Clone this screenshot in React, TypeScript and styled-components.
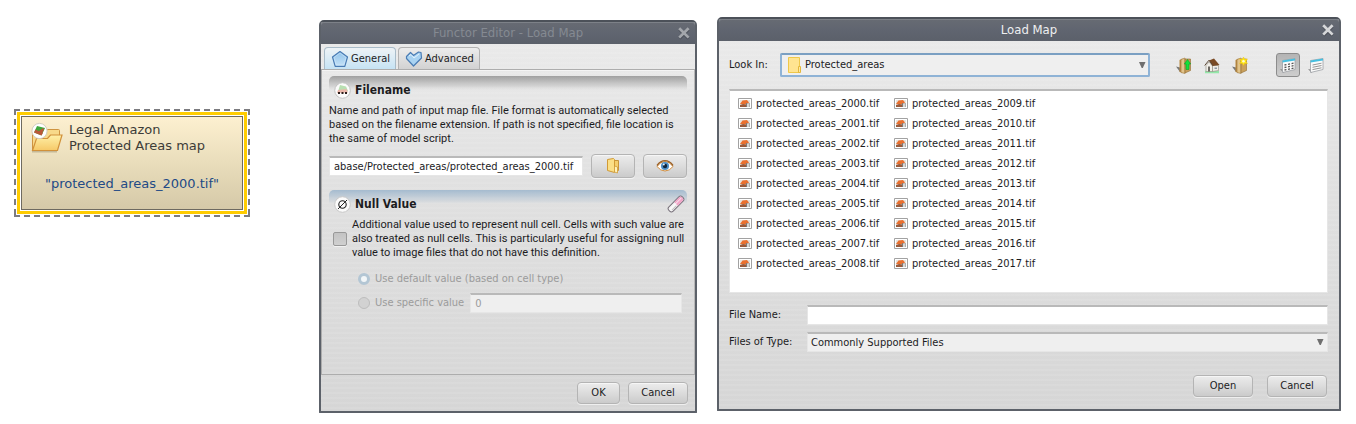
import React, { useState } from "react";
import styled, { createGlobalStyle, css } from "styled-components";

const GlobalStyle = createGlobalStyle`
  *, *::before, *::after { box-sizing: border-box; }
  body { margin: 0; background: #fff; }
  body, button, input, select {
    font-family: "DejaVu Sans Condensed", "DejaVu Sans", Tahoma, sans-serif;
    font-size: 11px;
    line-height: 14px;
    color: #1c1c1e;
  }
  svg { display: block; flex: none; }
`;

/* ---------- page ---------- */

const Page = styled.main`
  display: grid;
  grid-template-columns: 236px minmax(427px, 427fr) minmax(560px, 624fr);
  column-gap: 20px;
  align-items: start;
  padding: 17px 15px 11px 14px;
`;

/* ---------- model node ---------- */

const dashes = (angle: string) =>
  `repeating-linear-gradient(${angle}, #7c7c80 0 6px, transparent 6px 10px)`;

const Node = styled.section`
  margin-top: 92px;
  padding: 3px;
  background:
    ${dashes("90deg")} top / 100% 2px no-repeat,
    ${dashes("90deg")} bottom / 100% 2px no-repeat,
    ${dashes("180deg")} left / 2px 100% no-repeat,
    ${dashes("180deg")} right / 2px 100% no-repeat;
`;

const NodeFrame = styled.div`
  padding: 1px;
  border: 3px solid #ffcc00;
  background: #fff;
`;

const NodeBody = styled.div`
  display: flex;
  flex-direction: column;
  gap: 22px;
  height: 94px;
  padding: 5px 9px;
  border: 1px solid #6e6a60;
  background: linear-gradient(#fdf0d0, #e9ddbb 50%, #d5c9a8);
  font-family: "DejaVu Sans", sans-serif;
  font-size: 13px;
  line-height: 16px;
`;

const NodeTitle = styled.div`
  display: flex;
  gap: 6px;
  color: #3d3c38;
  white-space: nowrap;
`;

const NodeValue = styled.div`
  text-align: center;
  color: #224a86;
  white-space: nowrap;
`;

/* ---------- window chrome ---------- */

const Window = styled.section<{ $inset?: boolean }>`
  display: flex;
  flex-direction: column;
  min-height: ${(p) => (p.$inset ? 393 : 394)}px;
  margin: ${(p) => (p.$inset ? "3px 0 0 49px" : "0")};
  border: 2px solid #5c6169;
  border-top-color: #4c5159;
  border-radius: 5px 5px 1px 1px;
  background:
    repeating-linear-gradient(rgba(255, 255, 255, 0.08) 0 2px, transparent 2px 5px),
    linear-gradient(#ebebeb, #e1e1e1 40%, #d6d6d6);
`;

const TitleBar = styled.header<{ $dim?: boolean }>`
  display: flex;
  align-items: center;
  height: 22px;
  padding: 0 4px 0 18px;
  background: linear-gradient(#676b73, #606570 50%, #5b606a);
  box-shadow: inset 0 1px #7d8188;
  border-radius: 3px 3px 0 0;
  color: ${(p) => (p.$dim ? "#858a92" : "#eeeff0")};
`;

const WindowTitle = styled.h1`
  flex: 1;
  margin: 0;
  text-align: center;
  font-size: 13px;
  font-weight: 400;
  line-height: 16px;
`;

const CloseButton = styled.button<{ $dim?: boolean }>`
  padding: 0;
  border: 0;
  background: none;
  color: ${(p) => (p.$dim ? "#a3a6ab" : "#d6d7d9")};
`;

const PushButton = styled.button<{ $width: number; $tall?: boolean }>`
  display: flex;
  align-items: center;
  justify-content: center;
  width: ${(p) => p.$width}px;
  height: ${(p) => (p.$tall ? 24 : 22)}px;
  padding: 0;
  border: 1px solid #b4b4b4;
  border-radius: 4px;
  background: linear-gradient(#ececec, #dcdcdc 50%, #cbcbcb);
  box-shadow: inset 0 1px #f6f6f6, 0 1px rgba(255, 255, 255, 0.6);
`;

const sunken = css`
  height: 20px;
  min-width: 0;
  border: 1px solid #e6e6e6;
  border-top: 2px solid #b9b9b9;
  border-radius: 0;
  outline: 0;
`;

const TextBox = styled.input`
  ${sunken}
  flex: 1;
  width: 100%;
  padding: 0 4px;
  background: #fff;
  &:disabled {
    background: #efefef;
    color: #9b9b9b;
  }
`;

/* ---------- functor editor ---------- */

const Tabs = styled.div`
  display: flex;
  gap: 2px;
  padding: 3px 3px 0;
`;

const Tab = styled.button<{ $active?: boolean }>`
  display: flex;
  align-items: center;
  gap: 2px;
  height: 22px;
  padding: 0 5px 0 6px;
  border: 1px solid ${(p) => (p.$active ? "#a9bcc9" : "#b2b2b2")};
  border-bottom: 0;
  border-radius: 4px 4px 0 0;
  background: ${(p) =>
    p.$active ? "linear-gradient(#eef3f6, #c6e3f4)" : "linear-gradient(#ececec, #d2d2d2)"};
`;

const Pane = styled.div`
  flex: 1;
  padding: 6px 7px;
  border: 1px solid #adadad;
  border-right-color: #b8b8b8;
  box-shadow: inset 0 1px #f4f4f4;
`;

const SectionHead = styled.div<{ $tone: string }>`
  display: flex;
  align-items: center;
  gap: 4px;
  height: 28px;
  padding: 0 2px 0 5px;
  border-radius: 5px 5px 0 0;
  background: linear-gradient(${(p) => p.$tone}, transparent 14px);
`;

const SectionTitle = styled.h2`
  flex: 1;
  margin: 0;
  font-size: 12px;
  font-weight: 700;
`;

const Help = styled.p`
  margin: 0;
  font-family: Roboto, "DejaVu Sans Condensed", sans-serif;
  white-space: nowrap;
`;

const FileRow = styled.div`
  display: flex;
  align-items: center;
  gap: 8px;
  margin: 8px 0 12px;
`;

const NullOption = styled.label`
  display: flex;
  align-items: center;
  gap: 5px;
  padding-left: 4px;
`;

const CheckBox = styled.input`
  appearance: none;
  flex: none;
  width: 14px;
  height: 14px;
  margin: 0;
  border: 1px solid #999;
  border-radius: 2px;
  background: linear-gradient(#c3c3c3, #d0d0d0);
  box-shadow: 0 1px #f2f2f2;
`;

const Radios = styled.div`
  display: flex;
  flex-direction: column;
  gap: 4px;
  padding: 9px 5px 0 29px;
`;

const RadioRow = styled.div`
  display: flex;
  align-items: center;
  gap: 6px;
  height: 20px;
`;

const RadioLabel = styled.label`
  display: flex;
  align-items: center;
  gap: 5px;
  color: #9b9b9b;
  white-space: nowrap;
`;

const Radio = styled.input`
  appearance: none;
  width: 12px;
  height: 12px;
  margin: 0;
  border: 1px solid #bdbdbd;
  border-radius: 50%;
  background: #d2d2d2;
  &:checked {
    border: 3px solid #b3c6d4;
    background: #f2f6f8;
  }
`;

const Footer = styled.footer`
  display: flex;
  justify-content: flex-end;
  gap: 8px;
  padding: 7px;
`;

/* ---------- file chooser ---------- */

const Chooser = styled.form`
  flex: 1;
  display: grid;
  grid-template-columns: 78px 1fr;
  align-items: center;
  align-content: start;
  padding: 12px 11px 12px 10px;
`;

const LookIn = styled.div`
  grid-column: 1 / -1;
  display: flex;
  align-items: center;
  margin-bottom: 12px;
`;

const LookLabel = styled.label`
  width: 51px;
`;

const SelectWrap = styled.div`
  position: relative;
  flex: 1;
  display: flex;
`;

const WrapIcon = styled.span<{ $end?: boolean }>`
  position: absolute;
  top: 0;
  bottom: 0;
  ${(p) => (p.$end ? "right: 4px;" : "left: 8px;")}
  display: flex;
  align-items: center;
  pointer-events: none;
`;

const TypeSelect = styled.select`
  ${sunken}
  appearance: none;
  width: 100%;
  padding: 0 3px;
  background: #efefef;
`;

const PlaceSelect = styled.select`
  appearance: none;
  width: 100%;
  height: 24px;
  padding: 0 23px;
  border: 2px solid #8fb3d6;
  border-top-color: #7a9fc2;
  border-radius: 2px;
  outline: 0;
  background: #efefef;
`;

const Tools = styled.div`
  display: flex;
  align-items: center;
  gap: 4px;
  padding-left: 22px;
`;

const ToolButton = styled.button<{ $on?: boolean }>`
  display: flex;
  align-items: center;
  justify-content: center;
  width: 24px;
  height: 24px;
  padding: 0;
  border: 1px solid ${(p) => (p.$on ? "#8c8c8c" : "transparent")};
  border-radius: 3px;
  background: ${(p) => (p.$on ? "linear-gradient(#b4b4b4, #cdcdcd)" : "none")};
`;

const ToolGap = styled.span`
  width: 16px;
`;

const FileList = styled.ul`
  grid-column: 1 / -1;
  display: grid;
  grid-auto-flow: column;
  grid-template-rows: repeat(9, 20px);
  grid-auto-columns: 156px;
  height: 204px;
  margin: 0 0 12px;
  padding: 3px 8px;
  list-style: none;
  background: #fff;
  border: 1px solid #e6e6e6;
  border-top: 2px solid #b9b9b9;
`;

const FileItem = styled.li`
  display: flex;
  align-items: center;
  gap: 4px;
  white-space: nowrap;
`;

const TypeRow = styled.div`
  position: relative;
  display: flex;
  margin-top: 7px;
`;

const TypeLabel = styled.label`
  margin-top: 7px;
`;

const Actions = styled.div`
  grid-column: 1 / -1;
  display: flex;
  justify-content: flex-end;
  gap: 14px;
  margin-top: 23px;
  padding-right: 1px;
`;

/* ---------- icons ---------- */

const CloseIcon = () => (
  <svg width="14" height="14" viewBox="0 0 14 14">
    <path d="M2.5 3.5l9 9M11.500 3.500l-9 9" stroke="#3d4148" strokeWidth="3" opacity=".6" />
    <path d="M2.200 2.200l9.400 9.400M11.600 2.200l-9.400 9.400" stroke="currentColor" strokeWidth="2.700" />
  </svg>
);

const ArrowIcon = () => (
  <svg width="8" height="8" viewBox="0 0 8 8">
    <path d="M1 1h6.500L4.800 7H3.700z" fill="#6f6f6f" />
  </svg>
);

const NodeFolderIcon = () => (
  <svg width="32" height="32" viewBox="0 0 32 32">
    <defs>
      <linearGradient id="nf" x2="0" y2="1">
        <stop stopColor="#fff0a8" />
        <stop offset="1" stopColor="#f6c968" />
      </linearGradient>
    </defs>
    <path d="M1 29.500h25" stroke="#8a7c58" strokeWidth="2" opacity=".4" />
    <path d="M1.500 28V12q0-1 1-1h11l3-3.500h11q1 0 1 1V14L26 28z" fill="#f8d98a" stroke="#cf9440" />
    <path d="M1.500 28.500L5.500 16.500h11l3-3.500H31L26.500 28.500z" fill="url(#nf)" stroke="#d1913a" strokeWidth="1.200" />
    <circle cx="8.500" cy="9" r="7.600" fill="#fff" stroke="#d2cdbf" />
    <path d="M6 4l8 2-3.500 7.500L3 10.500z" fill="#3fa83c" />
    <path d="M4.500 7.500L12 11l-1.500 2.500L3 10.500zM8 9l4-3 1 1.500-2 4z" fill="#cf4a38" opacity=".85" />
  </svg>
);

const PentagonIcon = () => (
  <svg width="18" height="18" viewBox="0 0 18 18">
    <defs>
      <linearGradient id="pg" x2="0" y2="1">
        <stop stopColor="#8fc2ea" />
        <stop offset="1" stopColor="#c5e2f7" />
      </linearGradient>
    </defs>
    <path d="M9 1.500L16.500 7l-2.700 9.300H4.200L1.500 7z" fill="url(#pg)" stroke="#4a7cb4" strokeWidth="1.200" strokeLinejoin="round" />
    <path d="M9 3l6 4.500-2.200 7.500H5.200L3 7.500z" fill="none" stroke="#d6ebfa" strokeWidth=".7" opacity=".7" />
  </svg>
);

const HeartIcon = () => (
  <svg width="18" height="18" viewBox="0 0 18 18">
    <path d="M1.500 6.500L5.500 2.500l3 3L13.500 2l2.500.5.500 5.500-8 8-7-7.500z" fill="#a9d3f2" stroke="#4a7cb4" strokeWidth="1.200" strokeLinejoin="round" />
    <path d="M4 6l2-1.500L9 8l5-4" stroke="#e3f2fc" fill="none" />
  </svg>
);

const MapBadge = () => (
  <svg width="17" height="17" viewBox="0 0 17 17">
    <circle cx="8.500" cy="8.500" r="7.800" fill="#fbfbfb" stroke="#c3c3c3" />
    <path d="M6 3l6 1.500 2 4.500-10 .5z" fill="#b9dfb2" />
    <path d="M4 8l8.500-1 1.500 3.500-11 .5z" fill="#e9b7aa" />
    <path d="M4 10h2v2H4zM7.500 10h2v2h-2zM11 10h2v2h-2z" fill="#2b1c1a" />
  </svg>
);

const NullBadge = () => (
  <svg width="17" height="17" viewBox="0 0 17 17">
    <circle cx="8.500" cy="8.500" r="7.800" fill="#fbfbfb" stroke="#c9c9c9" />
    <circle cx="8.500" cy="8.500" r="3.700" fill="none" stroke="#222" strokeWidth="1.100" />
    <path d="M4 13l9-9" stroke="#222" />
  </svg>
);

const EraserIcon = () => (
  <svg width="18" height="18" viewBox="0 0 18 18">
    <g transform="rotate(-45 9 9)" strokeWidth="1">
      <rect x="-0.500" y="6" width="19" height="6" rx="2.500" fill="#f3f3f3" stroke="#77707a" />
      <path d="M9 6.500h7q2 0 2 2v1q0 2-2 2H9z" fill="#f1a6c8" />
      <path d="M1 8.500h16" stroke="#fff" opacity=".7" />
      <path d="M2 10.500h6" stroke="#bdbdbd" />
    </g>
  </svg>
);

const FolderIcon = () => (
  <svg width="14" height="18" viewBox="0 0 14 18">
    <path d="M5 3.500h7.500v10H5z" fill="#f5cf6c" stroke="#c8963a" />
    <path d="M1.500 2.500l6-1 1 1v13l-7-2z" fill="#fbdf86" stroke="#d19a35" strokeLinejoin="round" />
    <path d="M8.500 9l3 1v6l-3-1z" fill="#fff3bd" stroke="#d19a35" strokeWidth=".8" />
  </svg>
);

const EyeIcon = () => (
  <svg width="18" height="14" viewBox="0 0 18 14">
    <path d="M1 7.500Q4.500 2.500 9 2.500t8 5q-3.500 4.500-8 4.500t-8-4.500z" fill="#fff" stroke="#d08c3c" strokeWidth="1" />
    <path d="M1 6.500Q4.500 1.700 9 1.700t8 4.800" fill="none" stroke="#9a5f26" strokeWidth="1.300" />
    <circle cx="9" cy="7" r="4" fill="#4d8ec4" />
    <circle cx="9" cy="7" r="2.200" fill="#10243a" />
    <circle cx="7.800" cy="5.600" r="1" fill="#e6f3fc" />
  </svg>
);

const PlaceIcon = () => (
  <svg width="14" height="18" viewBox="0 0 14 18">
    <path d="M.5 1.500h11v15H.5z" fill="#ffe491" stroke="#efc84a" />
    <path d="M10.500 10.500h2v6h-2z" fill="#ffe99f" stroke="#e4b83c" />
  </svg>
);

const FolderBase = () => (
  <>
    <path d="M0 9.500l4 1v4.500z" fill="#777" />
    <path d="M3.500 3l3-1.500v14l-3-.5z" fill="#b98a43" />
    <path d="M5 2.500l4-1.500v15.500l-4-1z" fill="#e2c48a" stroke="#9c7435" strokeWidth=".6" />
    <path d="M9 2h5.500v11.500L9 16z" fill="#c9a05c" stroke="#8f6a2f" strokeWidth=".6" />
  </>
);

const UpFolderIcon = () => (
  <svg width="16" height="17" viewBox="0 0 16 17">
    <FolderBase />
    <path d="M11.500 2.500l3.200 4.500h-1.700v5.500h-3V7H8.300z" fill="#16e03a" stroke="#0a9f28" strokeWidth=".6" />
  </svg>
);

const NewFolderIcon = () => (
  <svg width="16" height="17" viewBox="0 0 16 17">
    <FolderBase />
    <path d="M11.500 0l1.200 2.300 2.800-.4-1.600 2.400 1.600 2.300-2.800-.3-1.200 2.200-1.200-2.200-2.700.3 1.500-2.300-1.500-2.400 2.700.4z" fill="#ffe81a" stroke="#f0c400" strokeWidth=".4" />
    <circle cx="11.500" cy="4.300" r="1.300" fill="#fffbd0" />
  </svg>
);

const HomeIcon = () => (
  <svg width="16" height="17" viewBox="0 0 16 17">
    <path d="M1 15h14" stroke="#7fe89a" strokeWidth="2.500" opacity=".8" />
    <path d="M2 8.500L5 5l3.500 4v5.500H2z" fill="#f2efe8" stroke="#8b867c" strokeWidth=".6" />
    <path d="M8.500 8.500h6v5l-6 1z" fill="#f0ede6" stroke="#8b867c" strokeWidth=".6" />
    <path d="M5 3.500L10 1.500l5.500 6.500-7 1z" fill="#7a4a24" />
    <path d="M.7 8.500L5 3.200l4 5.300" fill="none" stroke="#5e4a38" strokeWidth="1" />
    <path d="M4 9.500h2v5H4z" fill="#6a6660" />
    <path d="M10.500 10.500H13v1.500h-2.500z" fill="#8e9aa6" />
  </svg>
);

const SheetBase = () => (
  <>
    <path d="M0 12l4 1v3z" fill="#777" />
    <path d="M2.500 3.500L15 1.500v11L2.500 15.500z" fill="#fafafa" stroke="#9ca0a4" strokeWidth=".8" />
    <path d="M2.500 3.500L15 1.500v2L2.500 5.500z" fill="#45bfe0" />
  </>
);

const GridViewIcon = () => (
  <svg width="16" height="17" viewBox="0 0 16 17">
    <SheetBase />
    <path d="M4.500 8l9-1.800M4.500 10.500l9-1.800M4.500 13l9-1.800" stroke="#555" strokeWidth="1.300" strokeDasharray="2 1.600" />
  </svg>
);

const ListViewIcon = () => (
  <svg width="16" height="17" viewBox="0 0 16 17">
    <SheetBase />
    <path d="M4.500 8l9-1.800M4.500 10.300l9-1.800M4.500 12.600l9-1.800" stroke="#8a8a8a" strokeWidth=".9" />
  </svg>
);

const TifIcon = () => (
  <svg width="14" height="12" viewBox="0 0 14 12">
    <path d="M.5.5h13v10H.5z" fill="#fff" stroke="#a2a2a2" />
    <path d="M2 2h10v7H2z" fill="#e8e4de" />
    <path d="M2 6l2.500-3.500L9 2l2 2.500L9 6H2z" fill="#e9702f" />
    <path d="M2 7l3-1 4 .5V9H2z" fill="#9a5a3a" />
    <path d="M8 5h1.500v4H8zM10.500 5h1v4h-1z" fill="#7d7a78" />
    <path d="M9.500 5.500h1V9h-1z" fill="#fff" />
  </svg>
);

/* ---------- views ---------- */

const files = Array.from({ length: 18 }, (_, i) => `protected_areas_${2000 + i}.tif`);

function ModelNode() {
  return (
    <Node>
      <NodeFrame>
        <NodeBody>
          <NodeTitle>
            <NodeFolderIcon />
            <div>
              Legal Amazon
              <br />
              Protected Areas map
            </div>
          </NodeTitle>
          <NodeValue>"protected_areas_2000.tif"</NodeValue>
        </NodeBody>
      </NodeFrame>
    </Node>
  );
}

function FunctorEditor() {
  const [path, setPath] = useState("abase/Protected_areas/protected_areas_2000.tif");
  return (
    <Window $inset>
      <TitleBar $dim>
        <WindowTitle>Functor Editor - Load Map</WindowTitle>
        <CloseButton $dim aria-label="Close">
          <CloseIcon />
        </CloseButton>
      </TitleBar>
      <Tabs role="tablist">
        <Tab role="tab" aria-selected="true" $active>
          <PentagonIcon />
          General
        </Tab>
        <Tab role="tab" aria-selected="false">
          <HeartIcon />
          Advanced
        </Tab>
      </Tabs>
      <Pane role="tabpanel">
        <SectionHead $tone="#a0a0a0">
          <MapBadge />
          <SectionTitle id="filename">Filename</SectionTitle>
        </SectionHead>
        <Help>
          Name and path of input map file. File format is automatically selected
          <br />
          based on the filename extension. If path is not specified, file location is
          <br />
          the same of model script.
        </Help>
        <FileRow>
          <TextBox aria-labelledby="filename" value={path} onChange={(e) => setPath(e.target.value)} />
          <PushButton $width={44} $tall aria-label="Browse">
            <FolderIcon />
          </PushButton>
          <PushButton $width={44} $tall aria-label="Preview">
            <EyeIcon />
          </PushButton>
        </FileRow>
        <SectionHead $tone="#a5bbcf">
          <NullBadge />
          <SectionTitle>Null Value</SectionTitle>
          <EraserIcon />
        </SectionHead>
        <NullOption>
          <CheckBox type="checkbox" />
          <Help as="span">
            Additional value used to represent null cell. Cells with such value are
            <br />
            also treated as null cells. This is particularly useful for assigning null
            <br />
            value to image files that do not have this definition.
          </Help>
        </NullOption>
        <Radios>
          <RadioRow>
            <RadioLabel>
              <Radio type="radio" name="null" defaultChecked disabled />
              Use default value (based on cell type)
            </RadioLabel>
          </RadioRow>
          <RadioRow>
            <RadioLabel>
              <Radio type="radio" name="null" disabled />
              Use specific value
            </RadioLabel>
            <TextBox aria-label="Specific value" defaultValue="0" disabled />
          </RadioRow>
        </Radios>
      </Pane>
      <Footer>
        <PushButton $width={43}>OK</PushButton>
        <PushButton $width={60}>Cancel</PushButton>
      </Footer>
    </Window>
  );
}

function LoadMap() {
  return (
    <Window>
      <TitleBar>
        <WindowTitle>Load Map</WindowTitle>
        <CloseButton aria-label="Close">
          <CloseIcon />
        </CloseButton>
      </TitleBar>
      <Chooser onSubmit={(e) => e.preventDefault()}>
        <LookIn>
          <LookLabel htmlFor="place">Look In:</LookLabel>
          <SelectWrap>
            <PlaceSelect id="place">
              <option>Protected_areas</option>
            </PlaceSelect>
            <WrapIcon>
              <PlaceIcon />
            </WrapIcon>
            <WrapIcon $end>
              <ArrowIcon />
            </WrapIcon>
          </SelectWrap>
          <Tools>
            <ToolButton type="button" aria-label="Up one level">
              <UpFolderIcon />
            </ToolButton>
            <ToolButton type="button" aria-label="Home">
              <HomeIcon />
            </ToolButton>
            <ToolButton type="button" aria-label="New folder">
              <NewFolderIcon />
            </ToolButton>
            <ToolGap />
            <ToolButton type="button" aria-label="List" $on>
              <GridViewIcon />
            </ToolButton>
            <ToolButton type="button" aria-label="Details">
              <ListViewIcon />
            </ToolButton>
          </Tools>
        </LookIn>
        <FileList>
          {files.map((name) => (
            <FileItem key={name}>
              <TifIcon />
              {name}
            </FileItem>
          ))}
        </FileList>
        <label htmlFor="file-name">File Name:</label>
        <TextBox id="file-name" />
        <TypeLabel htmlFor="file-type">Files of Type:</TypeLabel>
        <TypeRow>
          <TypeSelect id="file-type">
            <option>Commonly Supported Files</option>
          </TypeSelect>
          <WrapIcon $end>
            <ArrowIcon />
          </WrapIcon>
        </TypeRow>
        <Actions>
          <PushButton $width={60}>Open</PushButton>
          <PushButton type="button" $width={60}>
            Cancel
          </PushButton>
        </Actions>
      </Chooser>
    </Window>
  );
}

export default function App() {
  return (
    <>
      <GlobalStyle />
      <Page>
        <ModelNode />
        <FunctorEditor />
        <LoadMap />
      </Page>
    </>
  );
}
